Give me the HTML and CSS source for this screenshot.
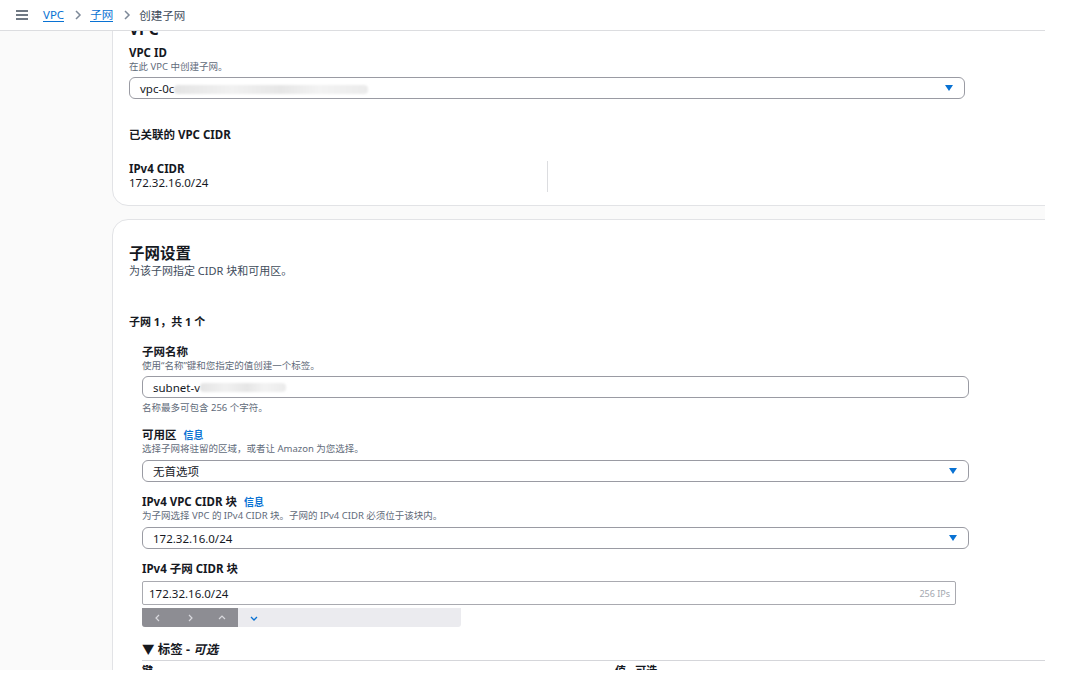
FILE: index.html
```html
<!DOCTYPE html>
<html lang="zh-CN">
<head>
    <meta charset="UTF-8">
    <title>创建子网</title>
    <link rel="stylesheet" href="styles.css">
</head>
<body>
<div class="frame">
    <!-- barra superior -->
    <div class="topbar">
        <span class="menu">
            <svg width="12" height="10" viewBox="0 0 12 10"><path d="M0 1h12M0 5h12M0 9h12" stroke="#414d5c" stroke-width="1.6"/></svg>
        </span>
        <a class="crumb" href="#">VPC</a>
        <svg class="sep" width="8" height="10" viewBox="0 0 8 10"><path d="M2 1l4 4-4 4" fill="none" stroke="#7d8998" stroke-width="1.5"/></svg>
        <a class="crumb" href="#">子网</a>
        <svg class="sep" width="8" height="10" viewBox="0 0 8 10"><path d="M2 1l4 4-4 4" fill="none" stroke="#7d8998" stroke-width="1.5"/></svg>
        <span class="current">创建子网</span>
    </div>

    <div class="main">
        <!-- VPC -->
        <div class="card card-vpc">
            <h2 class="card-title">VPC</h2>
            <div class="label">VPC ID</div>
            <div class="desc">在此 VPC 中创建子网。</div>
            <div class="select wide">
                <span>vpc-0c<span class="redact r1"></span></span>
                <span class="caret"></span>
            </div>

            <div class="label assoc">已关联的 VPC CIDR</div>
            <div class="cidr-grid">
                <div class="cidr-col">
                    <div class="label">IPv4 CIDR</div>
                    <div class="value">172.32.16.0/24</div>
                </div>
                <div class="cidr-col"></div>
            </div>
        </div>

        <!-- 子网设置 -->
        <div class="card card-subnet">
            <h2 class="card-title">子网设置</h2>
            <div class="card-desc">为该子网指定 CIDR 块和可用区。</div>

            <div class="subnet-count">子网 1，共 1 个</div>

            <div class="subnet">
                <div class="label">子网名称</div>
                <div class="desc">使用“名称”键和您指定的值创建一个标签。</div>
                <div class="input">subnet-v<span class="redact r2"></span></div>
                <div class="desc note">名称最多可包含 256 个字符。</div>

                <div class="label gap">可用区 <a class="info" href="#">信息</a></div>
                <div class="desc">选择子网将驻留的区域，或者让 Amazon 为您选择。</div>
                <div class="select">
                    <span>无首选项</span>
                    <span class="caret"></span>
                </div>

                <div class="label gap">IPv4 VPC CIDR 块 <a class="info" href="#">信息</a></div>
                <div class="desc">为子网选择 VPC 的 IPv4 CIDR 块。子网的 IPv4 CIDR 必须位于该块内。</div>
                <div class="select">
                    <span>172.32.16.0/24</span>
                    <span class="caret"></span>
                </div>

                <div class="label gap">IPv4 子网 CIDR 块</div>
                <div class="cidr-input">
                    <span>172.32.16.0/24</span>
                    <span class="ips">256 IPs</span>
                </div>
                <div class="stepper">
                    <div class="stepper-dark">
                        <svg width="8" height="8" viewBox="0 0 8 8"><path d="M5 1L2 4l3 3" fill="none" stroke="#d9d9de" stroke-width="1.2"/></svg>
                        <svg width="8" height="8" viewBox="0 0 8 8"><path d="M3 1l3 3-3 3" fill="none" stroke="#d9d9de" stroke-width="1.2"/></svg>
                        <svg width="8" height="8" viewBox="0 0 8 8"><path d="M1 5l3-3 3 3" fill="none" stroke="#d9d9de" stroke-width="1.2"/></svg>
                    </div>
                    <div class="stepper-light">
                        <svg width="8" height="8" viewBox="0 0 8 8"><path d="M1 3l3 3 3-3" fill="none" stroke="#0972d3" stroke-width="1.3"/></svg>
                    </div>
                </div>

                <div class="tags-head">&#9660; 标签 - <em>可选</em></div>
                <div class="tags-cols">
                    <span class="col-key">键</span>
                    <span class="col-val">值 - 可选</span>
                </div>
            </div>
        </div>
    </div>
</div>
</body>
</html>
```

FILE: styles.css
```css
body {
    margin: 0;
    background: #fff;
    font-family: "Noto Sans", "Noto Sans CJK SC", sans-serif;
    color: #16191f;
}
.frame {
    width: 1045px;
    height: 670px;
    overflow: hidden;
    background: #fafafa;
}
.topbar {
    height: 30px;
    background: #fff;
    border-bottom: 1px solid #dcdde0;
    display: flex;
    align-items: center;
    font-size: 11.5px;
    position: relative;
    z-index: 2;
}
.menu {
    display: flex;
    margin-left: 16px;
    margin-right: 15px;
}
.crumb {
    color: #0972d3;
    text-decoration: none;
    border-bottom: 1px solid #0972d3;
    line-height: 13px;
}
.sep {
    margin: 0 8px 0 10px;
}
.current {
    color: #414d5c;
}
.main {
    height: 639px;
    overflow: hidden;
    padding-left: 112px;
}
.card {
    width: 950px;
    background: #fff;
    border: 1px solid #e2e3e6;
    border-radius: 16px;
    box-sizing: border-box;
}
.card-vpc {
    margin-top: -20px;
    padding: 0 0 13px 16px;
}
.card-vpc .card-title {
    margin: 0 0 7px;
    line-height: 20px;
    padding-top: 7px;
}
.card-title {
    font-size: 15.5px;
    font-weight: 700;
    margin: 0;
    line-height: 20px;
}
.label {
    font-size: 11.5px;
    font-weight: 700;
    line-height: 14px;
}
.desc {
    font-size: 9.5px;
    color: #5f6b7a;
    line-height: 14px;
}
.value {
    font-size: 11.5px;
    line-height: 14px;
}
.select, .input {
    width: 827px;
    height: 22px;
    box-sizing: border-box;
    border: 1px solid #9a9ba3;
    border-radius: 6px;
    margin-top: 3px;
    padding: 0 11px 0 10px;
    display: flex;
    align-items: center;
    justify-content: space-between;
    font-size: 11.5px;
}
.input {
    justify-content: flex-start;
}
.select.wide {
    width: 836px;
}
.caret {
    width: 0;
    height: 0;
    border-left: 4.5px solid transparent;
    border-right: 4.5px solid transparent;
    border-top: 6px solid #0972d3;
}
.redact {
    display: inline-block;
    height: 9px;
    vertical-align: middle;
    background: linear-gradient(90deg, #e4e4e4, #f1f1f1 30%, #e6e6e6 55%, #f3f3f3 75%, #ebebeb);
    filter: blur(1.2px);
    border-radius: 4px;
}
.r1 {
    width: 194px;
}
.r2 {
    width: 86px;
}
.assoc {
    margin-top: 28px;
    line-height: 16px;
}
.cidr-grid {
    display: grid;
    grid-template-columns: 419px 1fr;
    margin-top: 18px;
}
.cidr-col:first-child {
    border-right: 1px solid #dcdde0;
    padding: 1px 0 2px;
}
.card-subnet {
    margin-top: 13px;
    padding: 23px 0 0 16px;
    height: 500px;
}
.card-desc {
    font-size: 11px;
    line-height: 16px;
    color: #414d5c;
}
.subnet-count {
    font-size: 11px;
    font-weight: 700;
    line-height: 16px;
    margin-top: 35px;
}
.subnet {
    padding-left: 13px;
    margin-top: 15px;
}
.note {
    margin-top: 3px;
}
.gap {
    margin-top: 13px;
}
.info {
    color: #0972d3;
    text-decoration: none;
    font-size: 10px;
    margin-left: 4px;
}
.subnet .select {
    margin-top: 4px;
}
.cidr-input {
    width: 814px;
    height: 24px;
    box-sizing: border-box;
    border: 1px solid #a9aab0;
    border-radius: 2px;
    margin-top: 5px;
    padding: 0 5px 0 6px;
    display: flex;
    align-items: center;
    justify-content: space-between;
    font-size: 11.5px;
}
.ips {
    font-size: 9px;
    color: #a3a8b0;
}
.stepper {
    width: 319px;
    height: 19px;
    margin-top: 3px;
    display: flex;
    background: #ebebef;
    border-radius: 0 0 3px 3px;
}
.stepper-dark {
    width: 96px;
    background: #8d8d93;
    border-radius: 0 0 0 3px;
    display: flex;
    align-items: center;
    gap: 24px;
    padding-left: 12px;
    box-sizing: border-box;
}
.stepper-light {
    display: flex;
    align-items: center;
    padding-left: 12px;
}
.tags-head {
    margin-top: 14px;
    font-size: 12.5px;
    font-weight: 700;
    line-height: 18px;
    border-bottom: 1px solid #d5d6da;
    padding-bottom: 1px;
}
.tags-head em {
    font-style: italic;
}
.tags-cols {
    display: flex;
    font-size: 11px;
    font-weight: 700;
    line-height: 16px;
    margin-top: 2px;
}
.col-key {
    width: 473px;
}
```
